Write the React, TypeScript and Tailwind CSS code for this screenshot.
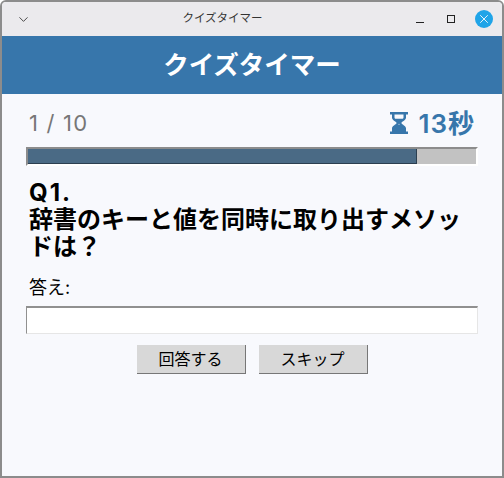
import { ChevronDown, X } from 'lucide-react';

const font = 'font-["Inter","Noto_Sans_CJK_JP",sans-serif]';

function Hourglass() {
  return (
    <svg width="20" height="24" viewBox="0 0 20 24" className="text-[#3776ab]" fill="currentColor">
      <path d="M1 1h18v2.500h-2v3c0 2.500-3.800 4-4.800 5.500 1 1.500 4.800 3 4.800 5.500v3h2V23H1v-2.500h2v-3C3 15 6.800 13.500 7.800 12 6.800 10.500 3 9 3 6.500v-3H1z" />
      <path d="M5.500 3.500h9v3c0 .6-.3 1-.7 1.300H6.200c-.4-.3-.7-.7-.7-1.300z" fill="#f8f9fd" />
      <path d="M10 12.500l.5 1.500h-1z" fill="#f8f9fd" />
    </svg>
  );
}

export default function App() {
  return (
    <div className={`${font} w-[504px] h-[478px] flex flex-col overflow-hidden rounded-t-[6px] border-2 border-[#8c8c8c] bg-[#f8f9fd]`}>
      {/* Title bar */}
      <div className="relative h-[34px] shrink-0 flex items-center justify-between bg-[#ebeaed] pl-[14px] pr-[9px]">
        <ChevronDown size={15} strokeWidth={1.4} className="text-[#333]" />
        <span className="text-[11.500px] text-[#333] mr-[2px]">クイズタイマー</span>
        <div className="flex items-center gap-[23px]">
          <div className="w-[8px] h-[1px] mt-[6px] bg-[#222]" />
          <div className="w-[8px] h-[8px] border border-[#222]" />
          <div className="w-[18px] h-[18px] ml-[-3px] rounded-full bg-[#1fa4e8] flex items-center justify-center">
            <X size={14} strokeWidth={1.500} className="text-white" />
          </div>
        </div>
      </div>

      {/* Header */}
      <div className="h-[58px] shrink-0 flex items-center justify-center bg-[#3776ab] text-white font-bold text-[25.500px]">
        クイズタイマー
      </div>

      {/* Body */}
      <div className="flex flex-col px-[24px]">
        <div className="h-[53px] flex items-center justify-between pt-[5px] pl-[3px] pr-[3px]">
          <span className="text-[22px] text-[#777] tracking-[1.200px]">1 / 10</span>
          <span className="flex items-center gap-[9px] text-[#3776ab] font-semibold text-[26px] tracking-[1px]">
            <Hourglass />
            13秒
          </span>
        </div>

        <div className="h-[19px] flex border-t-2 border-l-2 border-r-2 border-b-2 border-t-[#8c8c8c] border-l-[#8c8c8c] border-r-white border-b-white bg-[#c2c2c2]">
          <div className="w-[389px] bg-[#4a6a85] border-r border-b border-[#2c3f50]" />
        </div>

        <h2 className="mt-[13px] pl-[3px] text-[24px] leading-[27px] font-bold text-black">
          <span className="tracking-[2px]">Q1.</span>
          <br />
          辞書のキーと値を同時に取り出すメソッドは？
        </h2>

        <label className="mt-[15px] pl-[3px] text-[18px] leading-[26px] text-black">答え:</label>

        <input className="mt-[5px] h-[28px] w-full bg-white border-t-2 border-l border-r border-b border-t-[#909090] border-l-[#909090] border-r-[#e6e6e6] border-b-[#e6e6e6] outline-none" />

        <div className="mt-[11px] flex justify-center gap-[13px]">
          <button className="w-[109px] h-[29px] bg-[#d8d8d8] border-r border-b border-[#777] text-[16px] text-black">回答する</button>
          <button className="w-[109px] h-[29px] bg-[#d8d8d8] border-r border-b border-[#777] text-[16px] text-black">スキップ</button>
        </div>
      </div>
    </div>
  );
}
